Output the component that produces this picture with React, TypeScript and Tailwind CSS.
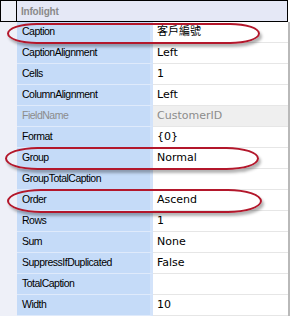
const rows: { name: string; value: string; disabled?: boolean }[] = [
  { name: "Caption", value: "客戶編號" },
  { name: "CaptionAlignment", value: "Left" },
  { name: "Cells", value: "1" },
  { name: "ColumnAlignment", value: "Left" },
  { name: "FieldName", value: "CustomerID", disabled: true },
  { name: "Format", value: "{0}" },
  { name: "Group", value: "Normal" },
  { name: "GroupTotalCaption", value: "" },
  { name: "Order", value: "Ascend" },
  { name: "Rows", value: "1" },
  { name: "Sum", value: "None" },
  { name: "SuppressIfDuplicated", value: "False" },
  { name: "TotalCaption", value: "" },
  { name: "Width", value: "10" },
]

function Highlight({ className }: { className: string }) {
  return (
    <div
      className={
        "absolute border-2 border-[#b3172b] rounded-[34px/12px] shadow-[2px_3px_3px_rgba(0,0,0,0.3)] pointer-events-none " +
        className
      }
    />
  )
}

export default function App() {
  return (
    <div className="relative w-[291px] h-[316px] bg-white overflow-hidden font-['Liberation_Sans',Arial,sans-serif]">
      <div className="flex h-full">
        <div className="flex flex-col w-[288px]">
          {/* category header */}
          <div className="flex h-[22px] border border-black bg-[#e5e8f6]">
            <div className="w-[16px] border-r border-black bg-[#eef0f8]" />
            <div className="flex items-center pl-[4px] text-[10px] font-bold text-[#8a8a8a] tracking-[-0.2px]">
              Infolight
            </div>
          </div>

          {/* property rows */}
          {rows.map((r) => (
            <div key={r.name} className="flex h-[21px]">
              <div className="w-[17px] bg-[#eef0f8]" />
              <div
                className={
                  "flex items-center w-[136px] pl-[5px] bg-[#c5dbf8] border-b border-[#dfeafb] border-r-[3px] border-r-[#d3e3fa] text-[10.5px] tracking-[-0.5px] " +
                  (r.disabled ? "text-[#8c8c8c]" : "text-black")
                }
              >
                {r.name}
              </div>
              <div
                className={
                  "flex flex-1 items-center pl-[4px] border-b border-[#e6e6e6] text-[11px] font-['DejaVu_Sans','Noto_Sans_CJK_TC',sans-serif] " +
                  (r.disabled ? "bg-[#efefef] text-[#8c8c8c]" : "bg-white text-black")
                }
              >
                {r.value}
              </div>
            </div>
          ))}
        </div>
        <div className="w-[2px] bg-[#b9b9b9] mt-[22px]" />
        <div className="w-[1px] bg-white" />
      </div>

      <Highlight className="left-[7px] top-[23px] w-[253px] h-[21px]" />
      <Highlight className="left-[5px] top-[147px] w-[254px] h-[23px]" />
      <Highlight className="left-[7px] top-[189px] w-[255px] h-[24px]" />
    </div>
  )
}
